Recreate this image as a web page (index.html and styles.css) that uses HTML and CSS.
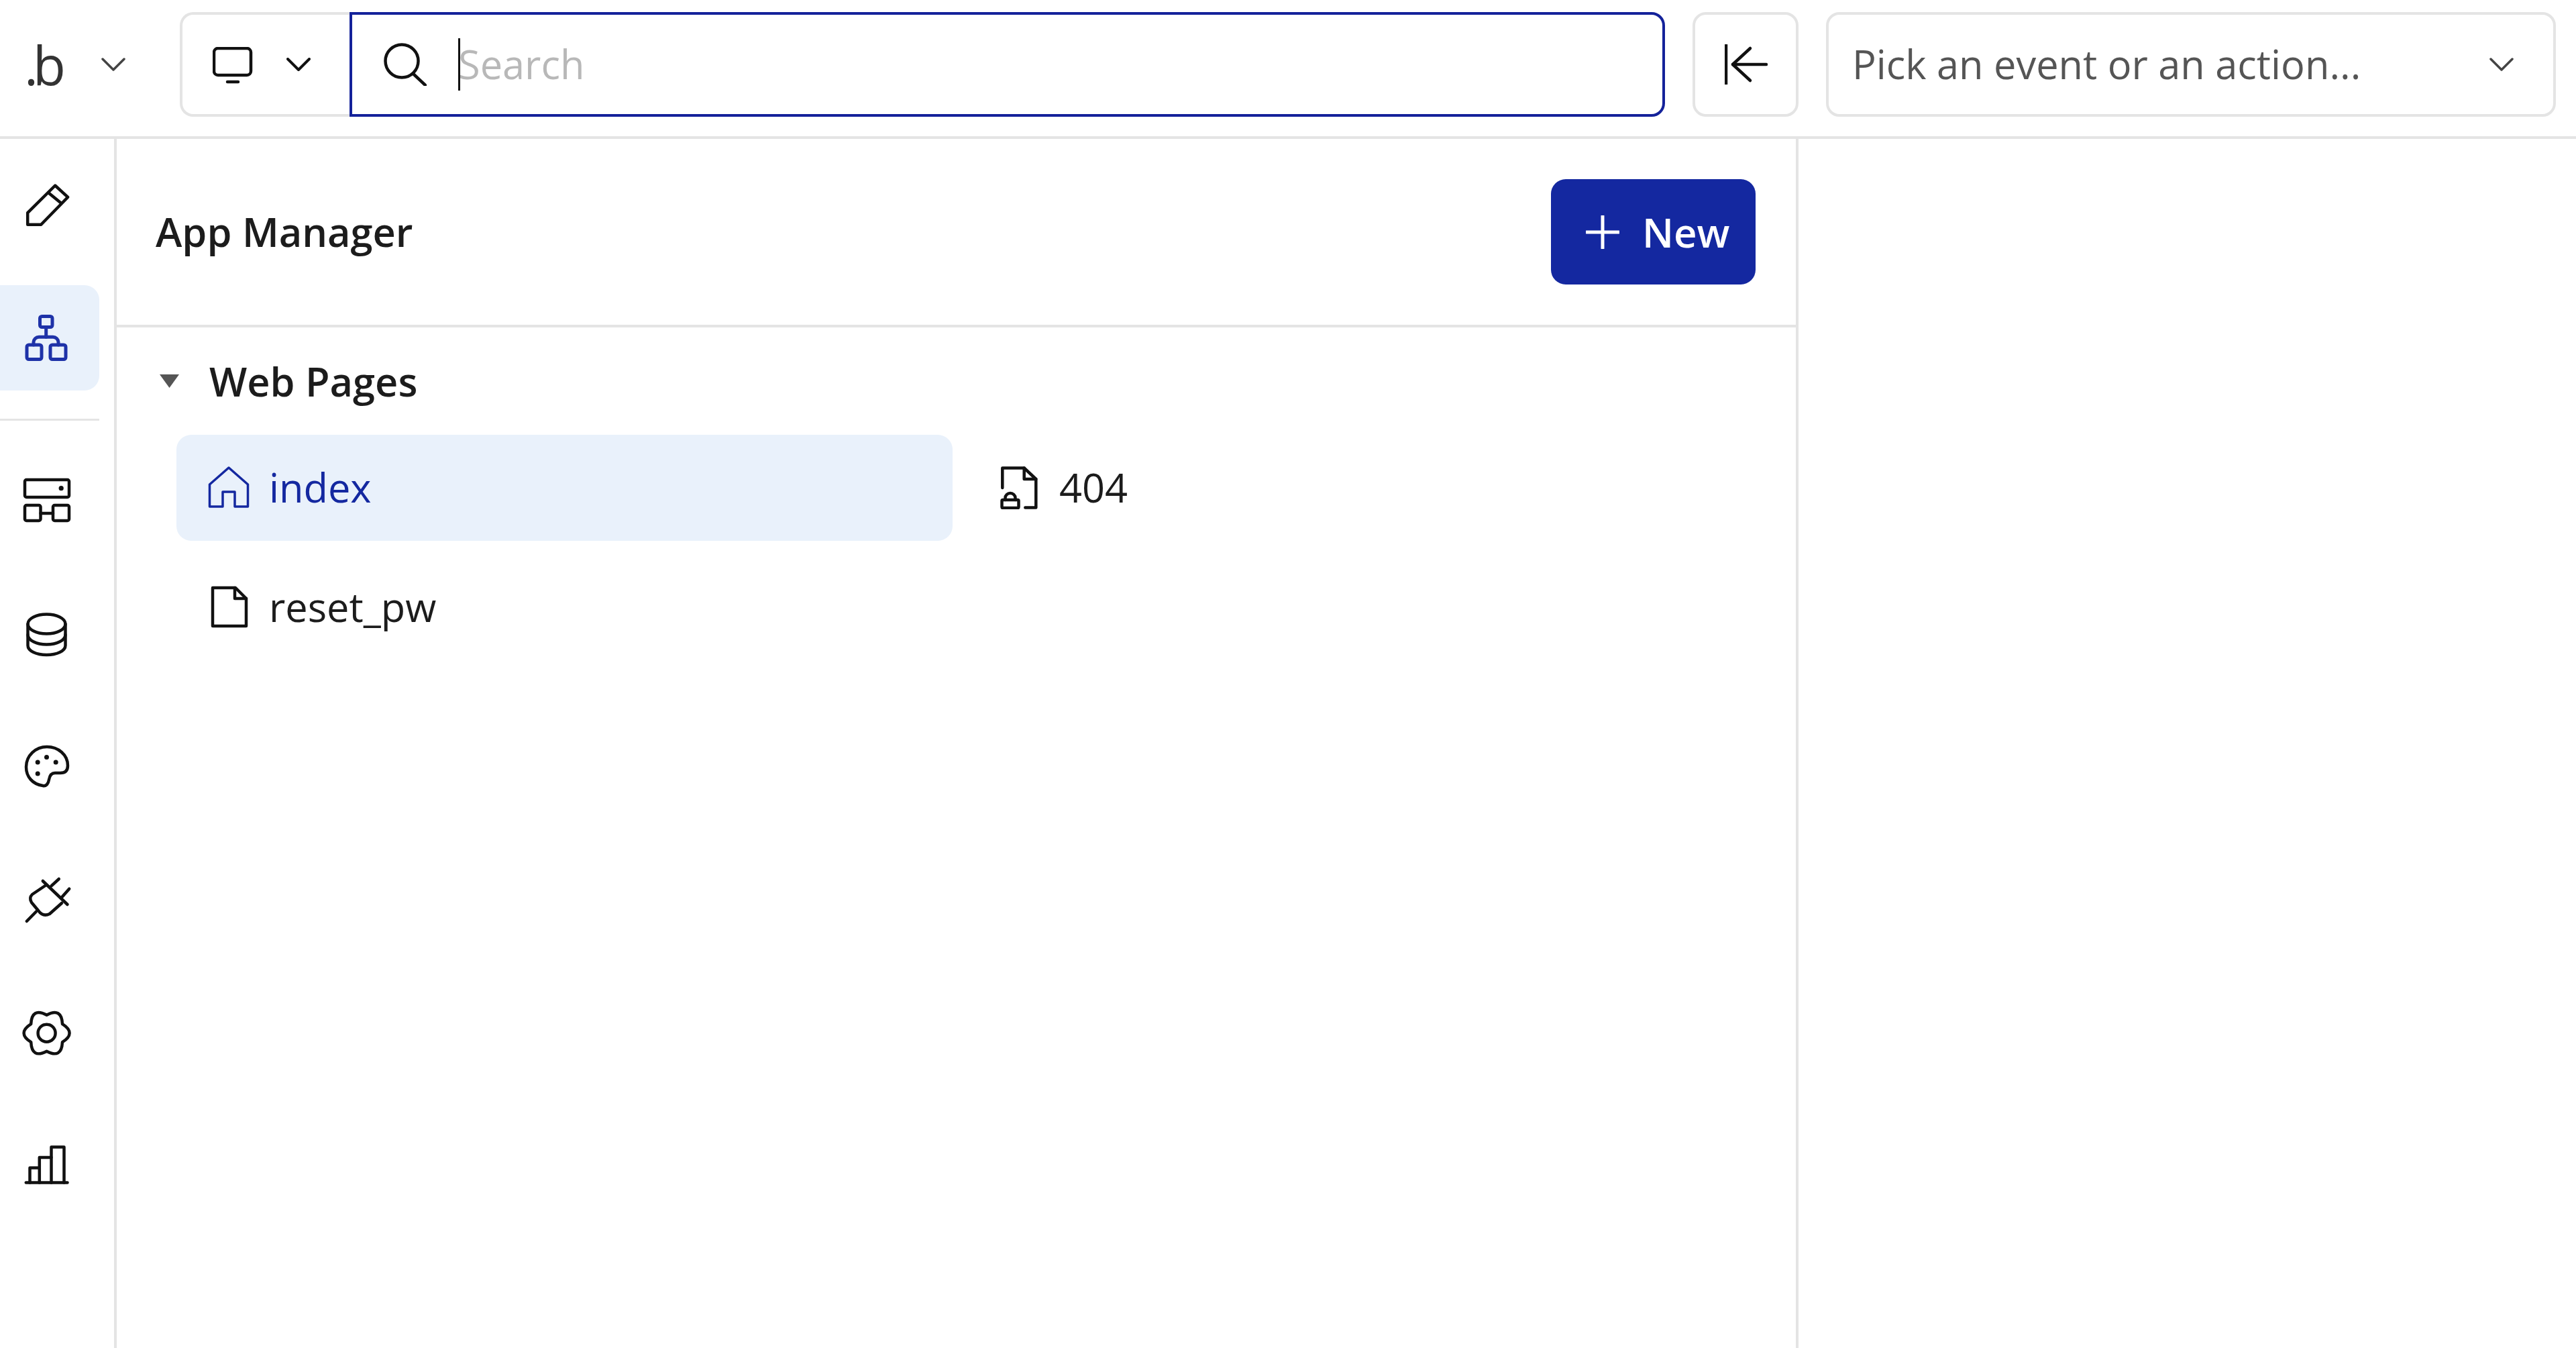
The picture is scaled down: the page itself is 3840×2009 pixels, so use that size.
FILE: index.html
```html
<!DOCTYPE html>
<html lang="en">
<head>
<meta charset="utf-8">
<title>App Manager</title>
<link rel="stylesheet" href="styles.css">
</head>
<body>
<header class="topbar">
  <div class="brand">
    <span class="logo">.b</span>
    <svg class="chev chev-grey" viewBox="0 0 36 20"><path d="M2 2 L18 18 L34 2"/></svg>
  </div>
  <div class="search-group">
    <div class="device">
      <svg class="device-icon" viewBox="0 0 60 56"><rect x="2" y="2" width="55" height="40" rx="6"/><path d="M22 52 H38"/></svg>
      <svg class="chev" viewBox="0 0 36 20"><path d="M2 2 L18 18 L34 2"/></svg>
    </div>
    <div class="search">
      <svg class="search-icon" viewBox="0 0 64 64"><circle cx="27" cy="27" r="24.5"/><path d="M44 46 L62 63"/></svg>
      <span class="caret"></span>
      <span class="placeholder">Search</span>
    </div>
  </div>
  <button class="back">
    <svg class="back-icon" viewBox="0 0 64 60"><path d="M2 1 V59"/><path d="M38 6 L12 30 L38 54"/><path d="M12 30 H62"/></svg>
  </button>
  <div class="event">
    <span class="event-text">Pick an event or an action...</span>
    <svg class="chev chev-grey" viewBox="0 0 36 20"><path d="M2 2 L18 18 L34 2"/></svg>
  </div>
</header>
<div class="workspace">
  <nav class="rail">
    <a class="rail-item"><svg class="rail-icon" viewBox="0 0 80 80"><path d="M11.2 51.2 V68.8 H31.2 L71.2 27.8 L52.2 10.5 Z"/><path d="M42.2 21.2 L60.5 36.2"/></svg></a>
    <a class="rail-item is-active"><svg class="rail-icon" viewBox="0 0 80 80"><rect x="29.5" y="7.5" width="18.5" height="16" rx="3"/><rect x="10" y="50" width="22" height="21.5" rx="3"/><rect x="45" y="50" width="23" height="21.5" rx="3"/><path d="M38.7 23.5 V38.3"/><path d="M20 50 V46 A8 8 0 0 1 28 38.3 H49 A8 8 0 0 1 57 46 V50"/></svg></a>
    <hr class="rail-rule">
    <a class="rail-item"><svg class="rail-icon" viewBox="0 0 80 80"><rect x="7" y="10" width="66" height="26" rx="2.5"/><circle class="dot" cx="61.2" cy="22.7" r="3.6"/><rect x="7" y="48" width="23.5" height="23" rx="2.5"/><rect x="49" y="48" width="24" height="23" rx="2.5"/><path d="M30.5 60 H49"/></svg></a>
    <a class="rail-item"><svg class="rail-icon" viewBox="0 -2 80 80"><ellipse cx="39.5" cy="25" rx="28" ry="14.5"/><path d="M11.5 25 V57 C11.5 65 24 71 39.5 71 S67.5 65 67.5 57 V25"/><path d="M11.5 41 C11.5 49 24 55.5 39.5 55.5 S67.5 49 67.5 41"/></svg></a>
    <a class="rail-item"><svg class="rail-icon" viewBox="0 -2 80 80"><path d="M40 10 C57 10 71 22 71 38 C71 46 67 49 60 49 H52 C46 49 44 53 43 59 C42 65 39 69 34 68 C19 66 9 55 9 40 C9 23 23 10 40 10 Z"/><circle class="dot" cx="26.2" cy="33" r="3.5"/><circle class="dot" cx="39.5" cy="25.4" r="3.5"/><circle class="dot" cx="53.2" cy="33" r="3.5"/><circle class="dot" cx="26.2" cy="50" r="3.5"/></svg></a>
    <a class="rail-item"><svg class="rail-icon" viewBox="0 -2 80 80"><path d="M33.8 11 L70.5 46"/><path d="M46.5 18.4 L57.8 8"/><path d="M61.2 36.3 L73.2 22.7"/><path d="M38.8 17 L18 31 Q13 36 17 43 L27 55 Q34 65 44 60 L62 44"/><path d="M23.8 56.7 L9.8 71"/></svg></a>
    <a class="rail-item"><svg class="rail-icon" viewBox="0 -2 80 80"><path d="M63 26.2 Q84.2 39.7 63 53.2 Q61.9 78.3 39.6 66.7 Q17.3 78.3 16.2 53.2 Q-5 39.7 16.2 26.2 Q17.3 1.1 39.6 12.7 Q61.9 1.1 63 26.2 Z"/><circle cx="39.6" cy="39.7" r="13"/></svg></a>
    <a class="rail-item"><svg class="rail-icon" viewBox="0 0 80 80"><path d="M8.8 66.4 H70.5"/><path d="M14.5 66.4 V44.6 H28.8 V66.4"/><path d="M28.8 44.6 V29 H46.5 V66.4"/><path d="M46.5 29 V13.6 H65.5 V66.4"/></svg></a>
  </nav>
  <main class="manager">
    <div class="manager-head">
      <h1 class="manager-title">App Manager</h1>
      <button class="new-btn">
        <svg class="plus" viewBox="0 0 50 50"><path d="M25 1 V49 M1 25 H49"/></svg>
        <span>New</span>
      </button>
    </div>
    <section class="tree">
      <div class="tree-head">
        <svg class="tree-caret" viewBox="0 0 29 20"><path d="M0 0 H29 L14.5 20 Z"/></svg>
        <span>Web Pages</span>
      </div>
      <div class="pages">
        <div class="page is-current">
          <svg class="page-icon" viewBox="0 0 64 64"><path d="M3.5 60 V27 L32 2 L60.5 27 V60 H41 V38 H23 V60 Z"/></svg>
          <span class="page-name">index</span>
        </div>
        <div class="page">
          <svg class="page-icon" viewBox="0 0 64 64"><path d="M4.3 32 V2.5 H36.7 L54.3 19 V61.5 H38.3"/><path d="M36.7 2.5 V19 H54.3"/><rect x="3.5" y="50" width="25" height="12" rx="1.5"/><path d="M8.5 50 V47 A7.5 7 0 0 1 23.5 47 V50"/></svg>
          <span class="page-name page-code">404</span>
        </div>
        <div class="page">
          <svg class="page-icon" viewBox="0 0 64 64"><path d="M8 3 H42 L58 19 V60 H8 Z"/><path d="M41 3 V19 H58"/></svg>
          <span class="page-name">reset_pw</span>
        </div>
      </div>
    </section>
  </main>
  <aside class="preview"></aside>
</div>
</body>
</html>
```

FILE: styles.css
```css
* { box-sizing: border-box; }
html, body { margin: 0; height: 100%; background: #fff; overflow: hidden; }
body { font-family: "Open Sans", "Noto Sans", sans-serif; font-size: 59.5px; color: #1c1c1c; display: flex; flex-direction: column; }
svg { display: block; fill: none; stroke: #111; stroke-width: 4.5; stroke-linejoin: round; stroke-linecap: round; flex: none; }
button { font: inherit; background: none; padding: 0; cursor: pointer; }

.topbar { height: 207px; flex: none; display: flex; align-items: flex-start; padding: 18px 30px 0 0; border-bottom: 4px solid #e4e4e4; }
.brand { width: 268px; height: 156px; flex: none; display: flex; align-items: center; padding-left: 36px; color: #444; }
.logo { font-family: "Open Sans", sans-serif; font-size: 80px; letter-spacing: -8px; line-height: 1; width: 115px; color: #333; }
.chev { width: 36px; height: 20px; stroke-width: 4; }
.chev-grey { stroke: #444; stroke-width: 3.5; }

.search-group { flex: none; width: 2214px; height: 156px; display: flex; }
.device { width: 253px; flex: none; display: flex; align-items: center; padding: 0 0 0 45px; gap: 50px; border: 4px solid #e4e4e4; border-right: 0; border-radius: 20px 0 0 20px; }
.device-icon { width: 60px; height: 56px; margin-top: 4px; }
.search { flex: 1; display: flex; align-items: center; border: 4px solid #14229a; border-radius: 0 20px 20px 0; padding-left: 47px; }
.search-icon { width: 64px; height: 64px; stroke-width: 4.5; }
.caret { width: 3px; height: 78px; background: #111; margin-left: 47px; }
.placeholder { color: #b8b8b8; margin: 0 0 4px -3px; }

.back { width: 158px; height: 156px; margin-left: 41px; flex: none; display: flex; align-items: center; justify-content: center; border: 4px solid #e4e4e4; border-radius: 20px; }
.back-icon { width: 64px; height: 60px; margin-left: 2px; }
.event { flex: 1; height: 156px; margin-left: 41px; display: flex; align-items: center; justify-content: space-between; padding: 0 59px 0 35px; border: 4px solid #e4e4e4; border-radius: 20px; }
.event-text { color: #555; margin-bottom: 4px; }

.workspace { flex: 1; display: flex; min-height: 0; }
.rail { width: 174px; flex: none; border-right: 4px solid #e4e4e4; padding: 20px 22px 0 0; display: flex; flex-direction: column; gap: 41.2px; }
.rail-item { height: 157px; flex: none; display: flex; align-items: center; justify-content: center; padding-right: 9px; border-radius: 0 22px 22px 0; }
.rail-item.is-active { background: #e9f1fb; }
.rail-icon { width: 80px; height: 80px; }
.is-active .rail-icon { stroke: #1e32a8; stroke-width: 5; }
.dot { fill: #111; stroke: none; }
.rail-rule { height: 3px; margin: 1px 0 -2px; border: 0; background: #e4e4e4; width: 148px; }

.manager { width: 2507px; flex: none; border-right: 4px solid #e4e4e4; display: flex; flex-direction: column; }
.manager-head { height: 281px; flex: none; display: flex; align-items: center; justify-content: space-between; padding: 0 60px 0 58px; border-bottom: 4px solid #e4e4e4; }
.manager-title { margin: 0 0 3px; font-size: 59.5px; font-weight: 600; }
.new-btn { width: 305px; height: 157px; display: flex; align-items: center; padding-left: 52px; gap: 34px; border: 0; border-radius: 22px; background: #1428a0; color: #fff; font-weight: 600; font-size: 60px; }
.plus { width: 50px; height: 50px; stroke: #fff; stroke-width: 5; }

.tree { padding: 39px 0 0 64px; }
.tree-head { height: 80px; display: flex; align-items: center; gap: 45px; font-weight: 600; }
.tree-caret { width: 29px; height: 20px; fill: #555; stroke: none; margin-top: 1px; }
.pages { margin: 41px 0 0 25px; display: grid; grid-template-columns: 1157px 1157px; column-gap: 24px; row-gap: 20px; }
.page { height: 158px; display: flex; align-items: center; gap: 28px; padding-left: 46px; border-radius: 22px; font-weight: 400; }
.page.is-current { background: #e9f1fb; color: #1428a0; }
.page-name { margin-bottom: 3px; }
.page-code { margin-left: -3px; }
.page-icon { width: 64px; height: 64px; }
.is-current .page-icon { stroke: #1428a0; stroke-width: 3.5; }
.preview { flex: 1; }
```
